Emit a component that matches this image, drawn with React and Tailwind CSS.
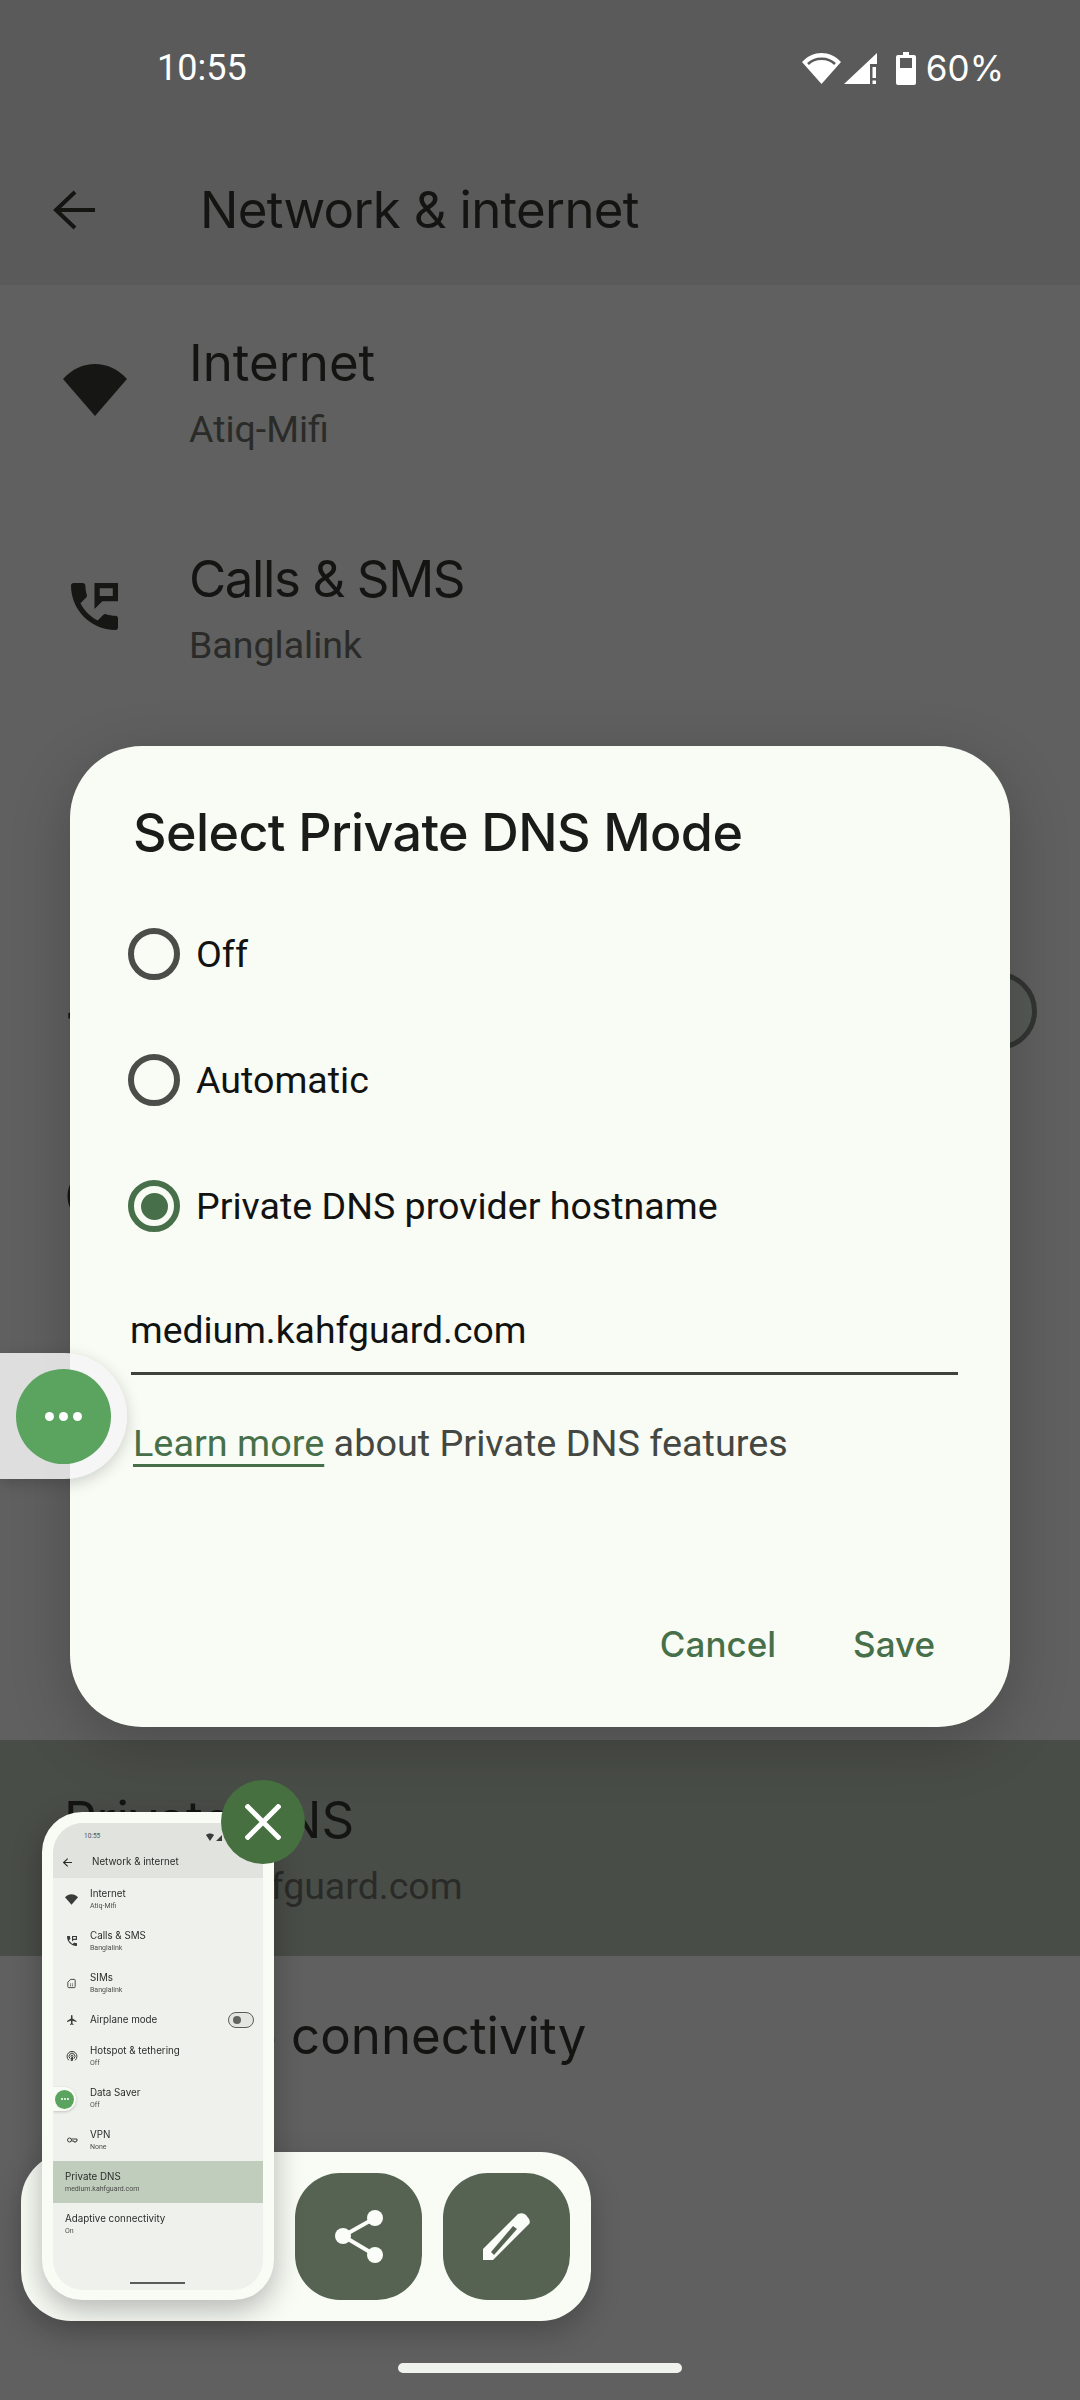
const sans = "font-['Inter','Noto_Sans',sans-serif]";
const roboto = "font-['Roboto','Noto_Sans',sans-serif]";

const WifiFill = ({ className }) => (
  <svg viewBox="0 0 64 52" className={className} fill="currentColor">
    <path d="M32 52 L0 15 C18 -5 46 -5 64 15 Z" />
  </svg>
);

const CallIcon = ({ className }) => (
  <svg viewBox="3 3 18 18" className={className} fill="currentColor">
    <path
      fillRule="evenodd"
      d="M20 15.5c-1.25 0-2.45-.2-3.57-.57-.35-.11-.74-.03-1.02.24l-2.2 2.2c-2.83-1.44-5.15-3.75-6.59-6.59l2.2-2.21c.28-.27.36-.66.25-1.01C8.7 6.45 8.5 5.25 8.5 4c0-.55-.45-1-1-1H4c-.55 0-1 .45-1 1 0 9.39 7.61 17 17 17 .55 0 1-.45 1-1v-3.5c0-.55-.45-1-1-1zM12 3v10l3-3h6V3h-9zM14 5h5v3h-5z"
    />
  </svg>
);

const SimIcon = ({ className }) => (
  <svg viewBox="0 0 24 24" className={className} fill="none" stroke="currentColor" strokeWidth="2">
    <path d="M10 3h8a2 2 0 0 1 2 2v14a2 2 0 0 1-2 2H6a2 2 0 0 1-2-2V9z" />
    <path d="M9 12h2v2H9zM13 12h2v2h-2zM9 16h2v2H9zM13 16h2v2h-2z" fill="currentColor" stroke="none" />
  </svg>
);

const PlaneIcon = ({ className }) => (
  <svg viewBox="0 0 24 24" className={className} fill="currentColor">
    <path d="M21 16v-2l-8-5V3.5c0-.83-.67-1.5-1.5-1.5S10 2.67 10 3.5V9l-8 5v2l8-2.5V19l-2 1.5V22l3.5-1 3.5 1v-1.5L13 19v-5.5l8 2.5z" />
  </svg>
);

const HotspotIcon = ({ className }) => (
  <svg viewBox="0 0 24 24" className={className} fill="none" stroke="currentColor" strokeWidth="2" strokeLinecap="round">
    <path d="M5 20a10 10 0 1 1 14 0" />
    <path d="M8 17a6 6 0 1 1 8 0" />
    <path d="M11 14a2 2 0 1 1 2 0v7h-2z" />
  </svg>
);

const KeyIcon = ({ className }) => (
  <svg viewBox="0 0 24 24" className={className} fill="none" stroke="currentColor" strokeWidth="2">
    <circle cx="7" cy="12" r="4" />
    <path d="M11 10h11v4h-2v2h-4v-2h-5" />
  </svg>
);

// behind: the row sits under the dialog, only its icon tip can peek out
const rows = [
  { icon: WifiFill, iconSize: "w-[64px] h-[52px]", thumbIcon: "w-[13px] h-[11px]", title: "Internet", sub: "Atiq-Mifi" },
  { icon: CallIcon, iconSize: "w-[47px] h-[47px]", thumbIcon: "w-[10px] h-[10px]", title: "Calls & SMS", sub: "Banglalink", tight: true },
  { icon: SimIcon, iconSize: "w-[48px] h-[48px]", thumbIcon: "w-[11px] h-[11px]", title: "SIMs", sub: "Banglalink", behind: true },
  { icon: PlaneIcon, iconSize: "w-[64px] h-[64px]", thumbIcon: "w-[12px] h-[12px]", title: "Airplane mode", toggle: true, behind: true },
  { icon: HotspotIcon, iconSize: "w-[60px] h-[60px]", thumbIcon: "w-[12px] h-[12px]", title: "Hotspot & tethering", sub: "Off", behind: true },
  { icon: null, title: "Data Saver", sub: "Off", behind: true },
  { icon: KeyIcon, iconSize: "w-[60px] h-[60px]", thumbIcon: "w-[12px] h-[12px]", title: "VPN", sub: "None", behind: true },
  { title: "Private DNS", sub: "medium.kahfguard.com", active: true },
  { title: "Adaptive connectivity", sub: "On" },
];

const ListRow = ({ row }) => {
  const Icon = row.icon;
  const inset = row.active || row.title.startsWith("Adaptive");
  return (
    <div
      className={`flex items-center shrink-0 ${row.toggle ? "h-[156px]" : "h-[216px]"} ${row.active ? "bg-[#494d47]" : ""} ${inset ? "pl-[64px]" : ""}`}
    >
      {!inset && (
        <div className="w-[189px] shrink-0 mb-[12px] flex items-center justify-center text-[#161715]">
          {Icon && <Icon className={row.iconSize} />}
        </div>
      )}
      <div className={`flex-1 ${inset ? "pt-[10px]" : ""}`}>
        {!row.behind && (
          <>
            <div className={`${sans} text-[51px] leading-[66px] text-[#141513] ${row.tight ? "tracking-[-1.4px]" : "tracking-normal"}`}>{row.title}</div>
            {row.sub && <div className={`${roboto} text-[37.500px] leading-[66px] text-[#2a2b29]`}>{row.sub}</div>}
          </>
        )}
      </div>
      {row.toggle && (
        <div className="w-[150px] h-[78px] mr-[43px] mb-[6px] rounded-full border-[5px] border-[#333533] bg-[#565a56]" />
      )}
    </div>
  );
};

const ThumbRow = ({ row }) => {
  const Icon = row.icon;
  const inset = row.active || row.title.startsWith("Adaptive");
  return (
    <div
      className={`flex items-center shrink-0 ${row.toggle ? "h-[31px]" : "h-[42px]"} ${row.active ? "bg-[#c0ccbc]" : ""} ${inset ? "pl-[12px]" : ""}`}
    >
      {!inset && (
        <div className="w-[37px] shrink-0 flex items-center justify-center text-[#3a3c39]">
          {Icon && <Icon className={row.thumbIcon} />}
        </div>
      )}
      <div className="flex-1">
        <div className={`${sans} text-[9.800px] leading-[13px] text-[#2a2c29]`}>{row.title}</div>
        {row.sub && <div className={`${roboto} text-[7px] leading-[12px] text-[#4b4d4a]`}>{row.sub}</div>}
      </div>
      {row.toggle && (
        <div className="w-[26px] h-[16px] mr-[9px] rounded-full border border-[#5a5c59] bg-[#e4e7e1] flex items-center pl-[4px]">
          <div className="w-[8px] h-[8px] rounded-full bg-[#62645f]" />
        </div>
      )}
    </div>
  );
};

const Radio = ({ checked, label }) => (
  <div className="h-[126px] flex items-center pl-[58px] gap-[16px]">
    <div
      className={`w-[52px] h-[52px] rounded-full border-[6px] flex items-center justify-center ${checked ? "border-[#47704a]" : "border-[#4a4d48]"}`}
    >
      {checked && <div className="w-[27px] h-[27px] rounded-full bg-[#47704a]" />}
    </div>
    <span className={`${roboto} text-[37.600px] text-[#121311]`}>{label}</span>
  </div>
);

export default function App() {
  return (
    <div className="relative w-[1080px] h-[2400px] overflow-hidden bg-[#5f605f]">
      {/* Status bar + app bar */}
      <div className="bg-[#595a59] h-[285px] flex flex-col">
        <div className="h-[136px] flex items-center justify-between pl-[157px] pr-[76px]">
          <span className={`${roboto} text-[36px] text-white`}>10:55</span>
          <div className="flex items-center">
            <svg viewBox="0 0 39 31" className="w-[39px] h-[31px]">
              <path d="M19.5 31 L0 9 C11 -3 28 -3 39 9Z" fill="#fff" />
              <path d="M6 11 C13 4 26 4 33 11" fill="none" stroke="#595a59" strokeWidth="2.5" />
            </svg>
            <svg viewBox="0 0 33 31" className="w-[33px] h-[31px] ml-[3px]" fill="#fff">
              <path d="M0 31 L26 31 L26 11 L33 11 L33 0Z" />
              <path d="M28.5 14h3.5v11h-3.5zM28.5 27.500h3.500v3.500h-3.500z" />
            </svg>
            <svg viewBox="0 0 20 33" className="w-[20px] h-[33px] ml-[19px]">
              <path d="M7 0h6v3h5a2 2 0 0 1 2 2v26a2 2 0 0 1-2 2H2a2 2 0 0 1-2-2V5a2 2 0 0 1 2-2h5z" fill="#fff" />
              <rect x="4" y="6" width="12" height="10" fill="#595a59" />
            </svg>
            <span className={`${sans} text-[35px] text-white ml-[10px]`}>60%</span>
          </div>
        </div>
        <div className="flex items-center h-[120px] mt-[14px]">
          <svg viewBox="0 0 42 40" className="w-[42px] h-[40px] ml-[53px] text-[#141513]" fill="none" stroke="currentColor" strokeWidth="4">
            <path d="M22 2 L3 20 L22 38 M3 20 H42" />
          </svg>
          <span className={`${sans} text-[51px] tracking-[-0.7px] text-[#141513] ml-[105px]`}>Network &amp; internet</span>
        </div>
      </div>

      {/* Settings list */}
      <div className="flex flex-col pt-[3px]">
        {rows.map((row) => (
          <ListRow key={row.title} row={row} />
        ))}
      </div>

      {/* Home indicator */}
      <div className="absolute left-[398px] top-[2363px] w-[284px] h-[10px] rounded-full bg-[#f0f2ee]" />

      {/* Dialog */}
      <div className="absolute left-[70px] top-[746px] w-[940px] h-[981px] rounded-[72px] bg-[#f8fcf5] shadow-[0_16px_60px_rgba(0,0,0,0.22)] flex flex-col">
        <h1 className={`${sans} pt-[55px] pl-[63px] text-[52px] leading-[64px] font-medium tracking-[-0.6px] text-[#1b1c1a]`}>
          Select Private DNS Mode
        </h1>
        <div className="mt-[26px]">
          <Radio label="Off" />
          <Radio label="Automatic" />
          <Radio checked label="Private DNS provider hostname" />
        </div>
        <div className="ml-[61px] w-[827px] h-[106px] flex items-end pb-[12px] border-b-[3px] border-[#3f413d]">
          <span className={`${roboto} text-[37.300px] leading-[60px] text-[#121311] -ml-[1px]`}>medium.kahfguard.com</span>
        </div>
        <p className={`${roboto} mt-[38px] ml-[63px] text-[37.800px] leading-[60px] text-[#444742]`}>
          <span className="text-[#47704a] underline decoration-[3px] underline-offset-[8px]">Learn more</span> about Private DNS features
        </p>
        <div className={`${sans} mt-auto pb-[53px] pr-[75px] flex justify-end gap-[77px] text-[35px] leading-[60px] font-medium text-[#47704a]`}>
          <span>Cancel</span>
          <span>Save</span>
        </div>
      </div>

      {/* Floating bubble */}
      <div className="absolute left-0 top-[1353px] w-[127px] h-[126px] rounded-r-[63px] bg-[#f5f5f5]/85 shadow-[0_4px_16px_rgba(0,0,0,0.18)] flex items-center">
        <div className="ml-[16px] w-[95px] h-[95px] rounded-full bg-[#5ba45f] flex items-center justify-center gap-[5px]">
          <div className="w-[9px] h-[9px] rounded-full bg-white" />
          <div className="w-[9px] h-[9px] rounded-full bg-white" />
          <div className="w-[9px] h-[9px] rounded-full bg-white" />
        </div>
      </div>

      {/* Screenshot actions */}
      <div className="absolute left-[21px] top-[2152px] w-[570px] h-[169px] rounded-[50px] bg-[#f8fcf5] shadow-[0_12px_30px_rgba(0,0,0,0.22)] flex items-center justify-end gap-[21px] pr-[21px]">
        <div className="w-[127px] h-[127px] rounded-[45px] bg-[#566352] flex items-center justify-center">
          <svg viewBox="0 0 48 54" className="w-[48px] h-[54px]" fill="#fbfdf8">
            <circle cx="40" cy="8" r="8" />
            <circle cx="8" cy="26" r="8" />
            <circle cx="40" cy="45" r="8" />
            <path d="M8 26 L40 8 M8 26 L40 45" stroke="#fbfdf8" strokeWidth="4" />
          </svg>
        </div>
        <div className="w-[127px] h-[127px] rounded-[45px] bg-[#566352] flex items-center justify-center">
          <svg viewBox="0 0 47 47" className="w-[47px] h-[47px]">
            <path d="M0 47 V36 L35 1 Q40 -1 43 2 L46 6 Q48 10 45 12 L10 47 Z" fill="#fbfdf8" />
            <path d="M8 39 L30 13 L34 16 L11 42 Z" fill="#566352" />
          </svg>
        </div>
      </div>

      {/* Screenshot thumbnail */}
      <div className="absolute left-[42px] top-[1812px] w-[232px] h-[488px] rounded-[40px] bg-[#f8fcf5] p-[11px] shadow-[0_10px_30px_rgba(0,0,0,0.28)]">
        <div className="relative w-[210px] h-[467px] rounded-[30px] overflow-hidden bg-[#eff2ec] flex flex-col blur-[0.3px]">
          <div className="h-[55px] shrink-0 bg-[#e0e3de] flex flex-col">
            <div className="h-[28px] flex items-center justify-between pl-[31px] pr-[37px]">
              <span className={`${roboto} text-[6.500px] text-[#555754]`}>10:55</span>
              <svg viewBox="0 0 20 8" className="w-[20px] h-[8px] text-[#3a3c39]" fill="currentColor">
                <path d="M4 8 L0 2 C2 0 6 0 8 2 Z M10 8 L16 2 V8 Z" />
              </svg>
            </div>
            <div className="flex items-center h-[22px]">
              <svg viewBox="0 0 42 40" className="w-[9px] h-[9px] ml-[10px] text-[#2a2c29]" fill="none" stroke="currentColor" strokeWidth="5">
                <path d="M22 2 L3 20 L22 38 M3 20 H42" />
              </svg>
              <span className={`${sans} text-[9.800px] text-[#2a2c29] ml-[20px]`}>Network &amp; internet</span>
            </div>
          </div>
          {rows.map((row) => (
            <ThumbRow key={row.title} row={row} />
          ))}
          <div className="absolute left-[77px] top-[459px] w-[55px] h-[2px] bg-[#5a5c59]" />
          <div className="absolute left-0 top-[264px] w-[23px] h-[24px] rounded-r-[12px] bg-[#f8fcf5] shadow-[0_1px_3px_rgba(0,0,0,0.2)] flex items-center">
            <div className="ml-[2px] w-[19px] h-[19px] rounded-full bg-[#5ba45f] flex items-center justify-center gap-[1px]">
              <div className="w-[2px] h-[2px] rounded-full bg-white" />
              <div className="w-[2px] h-[2px] rounded-full bg-white" />
              <div className="w-[2px] h-[2px] rounded-full bg-white" />
            </div>
          </div>
        </div>
      </div>

      {/* Dismiss */}
      <div className="absolute left-[221px] top-[1780px] w-[84px] h-[84px] rounded-full bg-[#46703f] flex items-center justify-center">
        <svg viewBox="0 0 36 36" className="w-[36px] h-[36px]" fill="none" stroke="#fff" strokeWidth="5">
          <path d="M1 1 L35 35 M35 1 L1 35" />
        </svg>
      </div>
    </div>
  );
}
